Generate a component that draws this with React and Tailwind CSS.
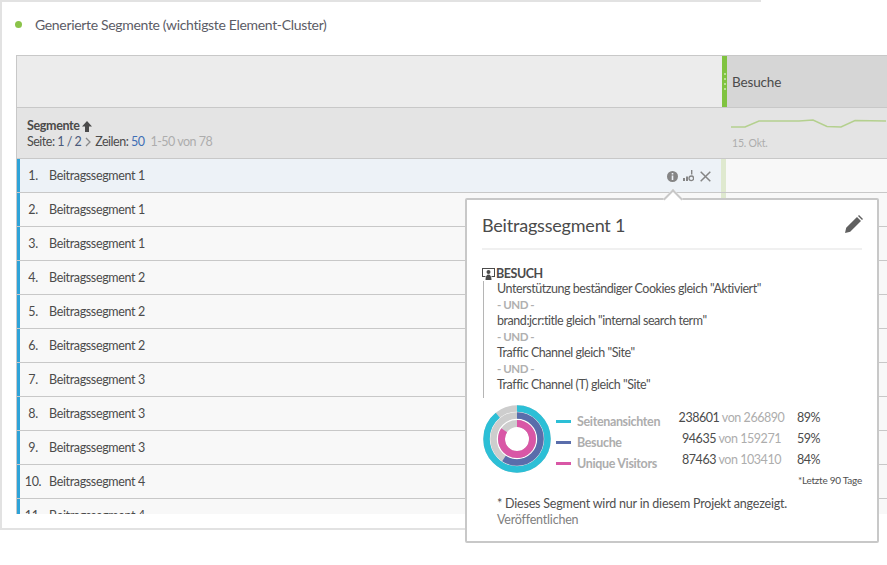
const rows = [
  "Beitragssegment 1",
  "Beitragssegment 1",
  "Beitragssegment 1",
  "Beitragssegment 2",
  "Beitragssegment 2",
  "Beitragssegment 2",
  "Beitragssegment 3",
  "Beitragssegment 3",
  "Beitragssegment 3",
  "Beitragssegment 4",
  "Beitragssegment 4",
];

const conditions = [
  'Unterstützung beständiger Cookies gleich "Aktiviert"',
  'brand:jcr:title gleich "internal search term"',
  'Traffic Channel gleich "Site"',
  'Traffic Channel (T) gleich "Site"',
];

const metrics = [
  { label: "Seitenansichten", color: "bg-[#2cbfd6]", value: "238601", total: "266890", pct: "89%" },
  { label: "Besuche", color: "bg-[#5a6dab]", value: "94635", total: "159271", pct: "59%" },
  { label: "Unique Visitors", color: "bg-[#d957a6]", value: "87463", total: "103410", pct: "84%" },
];

function Ring({ r, width, color, pct }) {
  const c = 2 * Math.PI * r;
  return (
    <g fill="none" strokeWidth={width}>
      <circle cx="34" cy="34" r={r} stroke="#cdcdcd" />
      <circle
        cx="34"
        cy="34"
        r={r}
        stroke={color}
        strokeDasharray={`${c * pct} ${c}`}
        transform="rotate(-90 34 34)"
      />
    </g>
  );
}

function Donut() {
  return (
    <svg width="68" height="68" viewBox="0 0 68 68" className="shrink-0">
      <Ring r="30.5" width="6.5" color="#2cbfd6" pct={0.89} />
      <Ring r="23.5" width="6.5" color="#5a6dab" pct={0.59} />
      <Ring r="15.5" width="7" color="#d957a6" pct={0.84} />
    </svg>
  );
}

function Popover() {
  return (
    <div className="absolute left-[465px] top-[198px] w-[414px] h-[345px] bg-white border-2 border-[#c8c8c8] rounded-[2px] px-[15px] text-[12.5px] tracking-[-0.45px] text-[#505050]">
      <div className="absolute left-[199px] top-[-8px] w-[14px] h-[14px] rotate-45 bg-white border-l-2 border-t-2 border-[#c8c8c8]" />
      <div className="flex items-center justify-between h-[49px] mt-[1px] border-b-2 border-[#f0f0f0]">
        <h3 className="text-[18px] font-normal text-[#4b4b4b] tracking-[-0.2px] mt-[1px]">Beitragssegment 1</h3>
        <svg width="18" height="18" viewBox="0 0 18 18" className="mr-[-1px] mt-[-2px]">
          <path d="M0 18l1.2-5.2L12 2l4 4L5.2 16.800z M13 1l1-1 4 4-1 1z" fill="#606060" />
        </svg>
      </div>
      <div className="mt-[17px] flex items-center gap-[1px] h-[14px] font-bold text-[#4b4b4b]">
        <svg width="13" height="12" viewBox="0 0 13 12">
          <path d="M0 0h13v9H9.500V8H12V1H1v7h2.500v1H0z M6.500 2a2 2 0 1 1 0 4a2 2 0 0 1 0-4z M3.500 12c0-3.500 1.200-5.400 3-5.400s3 1.900 3 5.400z" fill="#4b4b4b" />
        </svg>
        <span>BESUCH</span>
      </div>
      <div className="ml-[1px] pl-[13px] pb-[5px] border-l border-[#b5b5b5] leading-[16px]">
        {conditions.map((c, i) => (
          <div key={c}>
            {i > 0 && <div className="text-[#b0b0b0] font-bold text-[11.5px]">- UND -</div>}
            <div>{c}</div>
          </div>
        ))}
      </div>
      <div className="mt-[7px] ml-[1px] flex items-start">
        <Donut />
        <div className="ml-[5px] mt-[3px] flex-1">
          {metrics.map((m) => (
            <div key={m.label} className="flex items-center h-[21px]">
              <span className={`w-[15px] h-[3px] mt-[6px] ${m.color}`} />
              <span className="ml-[6px] w-[96px] mt-[8px] text-[#adadad] font-bold whitespace-nowrap tracking-[-0.35px]">{m.label}</span>
              <span className="w-[117px] text-center whitespace-nowrap text-[#4b4b4b]">
                {m.value} <span className="text-[#adadad]">von {m.total}</span>
              </span>
              <span className="ml-[7px] text-[#4b4b4b]">{m.pct}</span>
            </div>
          ))}
          <div className="mt-[2px] text-right text-[10px] tracking-[-0.25px] text-[#505050]">*Letzte 90 Tage</div>
        </div>
      </div>
      <div className="mt-[8px] ml-[15px] leading-[16px] tracking-[-0.2px]">
        <div>* Dieses Segment wird nur in diesem Projekt angezeigt.</div>
        <div className="text-[#808080]">Veröffentlichen</div>
      </div>
    </div>
  );
}

export default function App() {
  return (
    <div className="relative w-[887px] h-[565px] bg-white overflow-hidden font-['Lato',sans-serif]">
      <div className="w-[761px] h-[530px] border-l-2 border-t-2 border-b-2 border-[#e2e2e2]">
        <div className="flex items-center h-[50px] pb-[5px] pl-[13px]">
          <span className="w-[7px] h-[7px] rounded-full bg-[#8bc34a]" />
          <h2 className="ml-[13px] text-[14px] font-normal tracking-[-0.33px] text-[#5c5c66]">Generierte Segmente (wichtigste Element-Cluster)</h2>
        </div>
      </div>
      <div className="absolute left-[16px] top-[55px] w-[871px] h-[459px] overflow-hidden border-l border-t border-[#c8c8c8] text-[12.5px] tracking-[-0.35px] text-[#4b4b4b]">
        <div className="flex h-[52px] border-b border-[#c8c8c8] bg-[#ececec]">
          <div className="w-[705px]" />
          <div className="w-[5px] flex flex-col items-center justify-center gap-[3px] bg-[#80c340]">
            {[0, 1, 2, 3].map((d) => (
              <span key={d} className="w-[2px] h-[2px] rounded-full bg-[#cfe8b4]" />
            ))}
          </div>
          <div className="flex-1 flex items-center bg-[#d6d6d6] pl-[5px] pt-[1px] text-[13.5px] tracking-[-0.15px]">Besuche</div>
        </div>
        <div className="flex h-[51px] border-b border-[#c8c8c8] bg-[#e4e4e4]">
          <div className="w-[705px] pl-[10px] pt-[10px] leading-[16px]">
            <div className="flex items-center font-bold">
              Segmente
              <svg width="10" height="11" viewBox="0 0 10 11" className="ml-[2px]"><path d="M5 0l5 5.500H7V11H3V5.500H0z" fill="#4b4b4b" /></svg>
            </div>
            <div className="flex items-center whitespace-nowrap tracking-[-0.5px]">
              <span>Seite:&nbsp;</span>
              <span className="text-[#4b5a7a]">1 / 2</span>
              <svg width="6" height="10" viewBox="0 0 6 10" className="mx-[4px]"><path d="M1 1l4 4-4 4" fill="none" stroke="#8a8a8a" strokeWidth="1.300" /></svg>
              <span>Zeilen:&nbsp;</span>
              <span className="text-[#3f6fb5]">50</span>
              <span className="ml-[6px] text-[#adadad]">1-50 von 78</span>
            </div>
          </div>
          <div className="flex-1 pl-[11px] pt-[10px]">
            <svg width="156" height="12" viewBox="0 0 156 12" className="block"><path d="M0 9h14l14-6h40l14-1 14 6.500 14 .5 14-6.500 31 .5" fill="none" stroke="#b4d08e" strokeWidth="1.500" /></svg>
            <div className="mt-[6px] ml-[1px] text-[10.5px] tracking-[-0.2px] text-[#adadad]">15. Okt.</div>
          </div>
        </div>
        {rows.map((name, i) => (
          <div key={i} className={`flex h-[34px] border-b border-[#c8c8c8] ${i === 0 ? "bg-[#edf2f7]" : "bg-[#f8f8f8]"}`}>
            <div className="flex items-center pt-[1px] w-[704px] border-l-[3px] border-[#2ea3d8]">
              <span className="w-[26px] text-center">{i + 1}.</span>
              <span className="ml-[3px]">{name}</span>
              {i === 0 && (
                <div className="ml-auto mr-[10px] flex items-center gap-[5px]">
                  <svg width="11" height="11" viewBox="0 0 11 11">
                    <circle cx="5.500" cy="5.500" r="5.500" fill="#858585" />
                    <path d="M4.700 2h1.600v1.500H4.700z M4.700 4.500h1.600V9H4.700z" fill="#edf2f7" />
                  </svg>
                  <svg width="11" height="12" viewBox="0 0 11 12" fill="#858585">
                    <path d="M0 8h2v3H0z M3 6.500h2V11H3z M8 0h1.400v4.500H8z" />
                    <circle cx="8.300" cy="8.300" r="2.300" fill="none" stroke="#858585" strokeWidth="1.300" />
                  </svg>
                  <svg width="11" height="11" viewBox="0 0 11 11" className="ml-[1px]">
                    <path d="M.7.7l9.600 9.600M10.300.7L.7 10.300" fill="none" stroke="#858585" strokeWidth="1.500" />
                  </svg>
                </div>
              )}
            </div>
            <div className="w-[5px] bg-[#dfe9cf]" />
            <div className="flex-1 bg-[#f8f8f8]" />
          </div>
        ))}
      </div>
      <Popover />
    </div>
  );
}
